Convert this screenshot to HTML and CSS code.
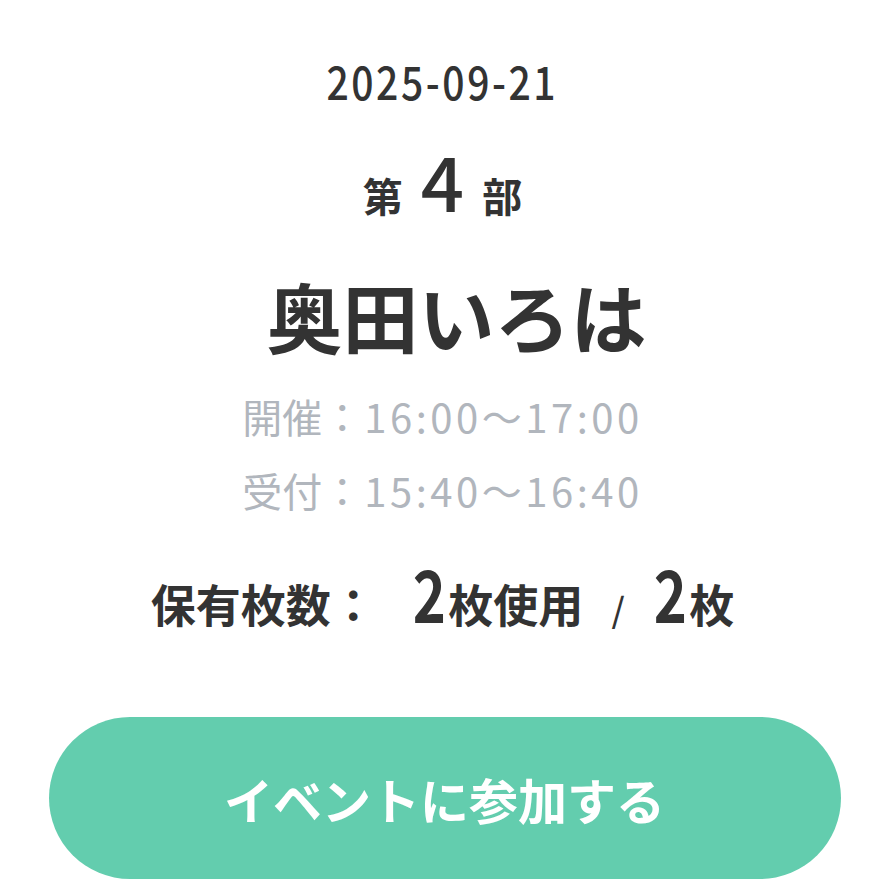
FILE: index.html
```html
<!DOCTYPE html>
<html>
  <head>
    <meta charset="utf-8" />
    <title>チケット</title>
    <link rel="stylesheet" href="styles.css">
  </head>

  <body>
    <div class="ticket">
      <p class="date">2025-09-21</p>
      <p class="part">第<span class="part-num">4</span>部</p>
      <h1 class="name">奥田いろは</h1>
      <p class="time">開催：<span class="num">16:00〜17:00</span></p>
      <p class="time">受付：<span class="num">15:40〜16:40</span></p>
      <p class="count">
        保有枚数：<span class="big first">2</span>枚使用<span class="slash">/</span><span class="big">2</span>枚
      </p>
      <a href="#" class="btn">イベントに参加する</a>
    </div>
  </body>
</html>
```

FILE: styles.css
```css
body {
  margin: 0;
  background: #fff;
  color: #333;
  font-family: "Noto Sans CJK JP", "Noto Sans", sans-serif;
}

.ticket {
  display: flex;
  flex-direction: column;
  align-items: center;
  padding-top: 48px;
}

p,
h1 {
  margin: 0;
}

/* 日付 (縦長の数字) */
.date {
  font-size: 46px;
  font-weight: 500;
  letter-spacing: 3px;
  line-height: 64px;
  transform: scaleX(0.85);
}

/* 第4部 */
.part {
  display: flex;
  align-items: baseline;
  gap: 18px;
  margin-top: 32px;
  font-size: 40px;
  font-weight: 700;
  line-height: 70px;
}
.part-num {
  font-size: 76px;
  font-weight: 500;
}

/* 名前 */
.name {
  margin-top: 35px;
  margin-bottom: 14px;
  padding-left: 28px;
  font-size: 76px;
  font-weight: 700;
  line-height: 100px;
}

/* 時間 */
.time {
  color: #b1b6bd;
  font-size: 40px;
  font-weight: 400;
  line-height: 74px;
}
.time .num {
  margin-left: 2px;
  letter-spacing: 3.5px;
}

/* 保有枚数 */
.count {
  display: flex;
  align-items: baseline;
  margin-top: 25px;
  font-size: 45px;
  font-weight: 700;
  line-height: 80px;
}
.count .big {
  display: inline-block;
  margin: 0 -2px 0 -4px;
  font-size: 72px;
  font-weight: 700;
  transform: scaleX(0.78);
}
.count .big.first {
  margin-left: 32px;
}
.count .slash {
  margin: 0 28px 0 28px;
  font-size: 34px;
  font-weight: 500;
}

/* 参加ボタン */
.btn {
  display: flex;
  justify-content: center;
  align-items: center;
  width: 792px;
  height: 162px;
  margin-top: 68px;
  margin-left: 4px;
  border-radius: 81px;
  background: #63cdae;
  color: #fff;
  font-size: 49px;
  font-weight: 700;
  text-decoration: none;
}
```
